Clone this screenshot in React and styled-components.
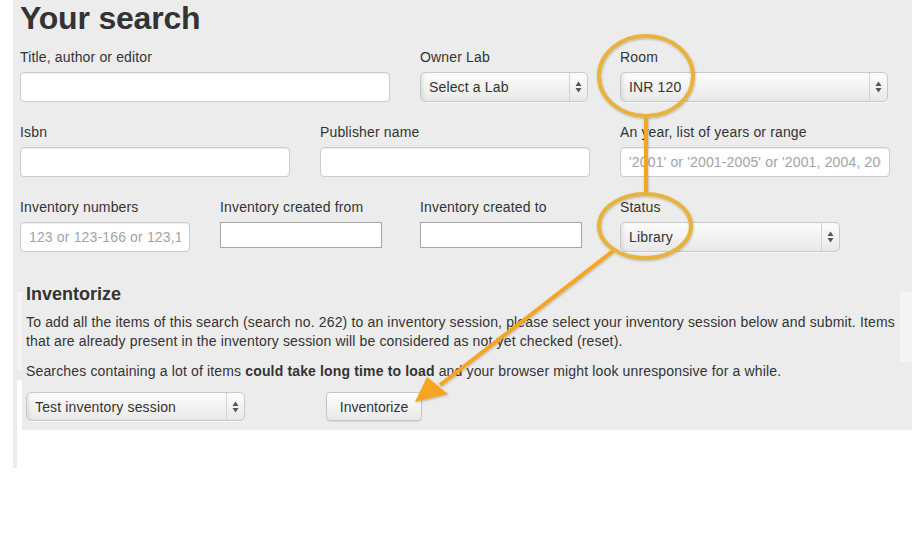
import React from "react";
import styled, { createGlobalStyle } from "styled-components";

const GlobalStyle = createGlobalStyle`
  body {
    margin: 0;
    background: #fff;
    font-family: "Liberation Sans", Helvetica, Arial, sans-serif;
    font-size: 14px;
    color: #333;
  }
`;

const rows = [
  [
    { label: "Title, author or editor", span: 4, kind: "text", width: 370 },
    { label: "Owner Lab", span: 2, kind: "select", width: 168, value: "Select a Lab" },
    { label: "Room", span: 3, kind: "select", width: 268, value: "INR 120" },
  ],
  [
    { label: "Isbn", span: 3, kind: "text", width: 270 },
    { label: "Publisher name", span: 3, kind: "text", width: 270 },
    {
      label: "An year, list of years or range",
      span: 3,
      kind: "text",
      width: 270,
      placeholder: "'2001' or '2001-2005' or '2001, 2004, 2005'",
    },
  ],
  [
    {
      label: "Inventory numbers",
      span: 2,
      kind: "text",
      width: 170,
      placeholder: "123 or 123-166 or 123,124",
    },
    { label: "Inventory created from", span: 2, kind: "plain", width: 162 },
    { label: "Inventory created to", span: 2, kind: "plain", width: 162 },
    { label: "Status", span: 3, kind: "select", width: 220, value: "Library" },
  ],
];

const Arrows = () => (
  <svg width="7" height="12" viewBox="0 0 7 12">
    <path d="M3.5 0.5 L6.5 5 L0.5 5 Z" fill="#555" />
    <path d="M3.5 11.5 L6.5 7 L0.5 7 Z" fill="#555" />
  </svg>
);

const Select = ({ value, width, height = 30 }) => (
  <SelectBox $width={width} $height={height}>
    <SelectValue>{value}</SelectValue>
    <SelectArrow>
      <Arrows />
    </SelectArrow>
  </SelectBox>
);

const Field = ({ f }) => (
  <FieldCol $span={f.span}>
    <Label>{f.label}</Label>
    {f.kind === "select" && <Select value={f.value} width={f.width} />}
    {f.kind === "text" && (
      <TextInput type="text" $width={f.width} placeholder={f.placeholder || ""} />
    )}
    {f.kind === "plain" && <PlainInput type="text" $width={f.width} />}
  </FieldCol>
);

// orange annotation drawn over the form
const Annotations = () => (
  <Overlay width="924" height="560" viewBox="0 0 924 560">
    <defs>
      <filter id="sh" x="-10%" y="-10%" width="120%" height="120%">
        <feDropShadow dx="0.5" dy="1" stdDeviation="1" floodColor="#000" floodOpacity="0.25" />
      </filter>
    </defs>
    <g filter="url(#sh)">
      <line x1="646" y1="116" x2="646" y2="196" stroke="#f5a524" strokeWidth="4" />
      <line x1="613" y1="251" x2="440" y2="385" stroke="#f5a524" strokeWidth="4" />
      <polygon points="415,402 427,377 448,394" fill="#f5a524" />
      <ellipse cx="646" cy="76" rx="47" ry="40" fill="none" stroke="#e8b33c" strokeWidth="4" />
      <ellipse cx="645" cy="226" rx="46" ry="32" fill="none" stroke="#e8b33c" strokeWidth="4" />
    </g>
  </Overlay>
);

export default function App() {
  return (
    <Root>
      <GlobalStyle />
      <Panel>
        <Title>Your search</Title>
        <Form>
          {rows.map((row, i) => (
            <Row key={i}>
              {row.map((f) => (
                <Field key={f.label} f={f} />
              ))}
            </Row>
          ))}
        </Form>
      </Panel>
      <SectionRow>
        <Gutter />
        <Section>
          <SectionTitle>Inventorize</SectionTitle>
          <Text>
            To add all the items of this search (search no. 262) to an inventory session, please select your inventory session below and submit. Items
            <br />
            that are already present in the inventory session will be considered as not yet checked (reset).
          </Text>
          <Text>
            Searches containing a lot of items <b>could take long time to load</b> and your browser might look unresponsive for a while.
          </Text>
          <Controls>
            <Select value="Test inventory session" width={219} height={29} />
            <Button>Inventorize</Button>
          </Controls>
        </Section>
      </SectionRow>
      <Tail />
      <Annotations />
    </Root>
  );
}

const Root = styled.div`
  position: relative;
  width: 924px;
  height: 560px;
  overflow: hidden;
`;

const Panel = styled.div`
  margin-left: 13px;
  width: 899px;
  box-sizing: border-box;
  padding-left: 7px;
  background: #ececec;
`;

const Title = styled.h1`
  margin: 0;
  font-size: 32px;
  line-height: 36px;
  font-weight: bold;
  color: #333;
  letter-spacing: -0.2px;
`;

const Form = styled.div`
  padding-top: 11px;
`;

const Row = styled.div`
  display: flex;
  padding-bottom: 20px;
`;

const FieldCol = styled.div`
  flex: 0 0 ${(p) => p.$span * 100}px;
  display: flex;
  flex-direction: column;
  align-items: flex-start;
`;

const Label = styled.label`
  display: block;
  font-size: 14px;
  line-height: 20px;
  margin-bottom: 5px;
  color: #333;
  letter-spacing: 0.15px;
  white-space: nowrap;
`;

const TextInput = styled.input`
  box-sizing: border-box;
  width: ${(p) => p.$width}px;
  height: 30px;
  margin: 0;
  padding: 4px 8px;
  border: 1px solid #ccc;
  border-radius: 4px;
  background: #fff;
  box-shadow: inset 0 1px 1px rgba(0, 0, 0, 0.075);
  font-family: inherit;
  font-size: 14px;
  letter-spacing: 0.15px;
  color: #555;
  outline: none;

  &::placeholder {
    color: #a3a3a3;
  }
`;

const PlainInput = styled.input`
  box-sizing: border-box;
  width: ${(p) => p.$width}px;
  height: 26px;
  margin: 0;
  padding: 2px 4px;
  border: 1px solid #a5a5a5;
  border-radius: 0;
  background: #fff;
  font-family: inherit;
  font-size: 13px;
  outline: none;
`;

const SelectBox = styled.div`
  box-sizing: border-box;
  width: ${(p) => p.$width}px;
  height: ${(p) => p.$height}px;
  display: flex;
  align-items: stretch;
  border: 1px solid #c9c9c9;
  border-radius: 5px;
  background: linear-gradient(to bottom, #fdfdfd 0%, #f3f3f3 45%, #e9e9e9 100%);
  box-shadow: inset 3px 0 4px -2px rgba(0, 0, 0, 0.12), 0 1px 0 rgba(255, 255, 255, 0.6);
`;

const SelectValue = styled.span`
  flex: 1;
  display: flex;
  align-items: center;
  padding-left: 8px;
  font-size: 14px;
  letter-spacing: 0.15px;
  color: #333;
  white-space: nowrap;
  overflow: hidden;
`;

const SelectArrow = styled.span`
  width: 17px;
  display: flex;
  align-items: center;
  justify-content: center;
  border-left: 1px solid #d3d3d3;
`;

const SectionRow = styled.div`
  display: flex;
`;

const Gutter = styled.div`
  margin-left: 13px;
  width: 9px;
  box-sizing: border-box;
  border-left: 4px solid #ececec;
  background: linear-gradient(
    to bottom,
    #ececec 0 20px,
    #f4f4f4 20px 98px,
    #ececec 98px 108px,
    #fff 108px
  );
`;

const Section = styled.div`
  width: 890px;
  box-sizing: border-box;
  padding: 12px 0 9px 4px;
  background: linear-gradient(90deg, transparent 878px, #f4f4f4 878px) no-repeat 0 20px / 100% 70px,
    #ececec;
`;

const SectionTitle = styled.h2`
  margin: 0 0 9px;
  font-size: 18px;
  line-height: 20px;
  font-weight: bold;
  color: #333;
`;

const Text = styled.p`
  margin: 0 0 11px;
  font-size: 14px;
  line-height: 19px;
  letter-spacing: 0.15px;
  color: #333;
  white-space: nowrap;

  b {
    font-weight: bold;
  }
`;

const Controls = styled.div`
  display: flex;
  align-items: center;
`;

const Button = styled.button`
  box-sizing: border-box;
  margin-left: 81px;
  width: 96px;
  height: 29px;
  padding: 0;
  border: 1px solid #c4c4c4;
  border-radius: 4px;
  background: linear-gradient(to bottom, #ffffff, #e8e8e8);
  box-shadow: 0 1px 1px rgba(0, 0, 0, 0.08);
  font-family: inherit;
  font-size: 14px;
  color: #333;
`;

const Tail = styled.div`
  margin-left: 13px;
  width: 4px;
  height: 38px;
  background: #ececec;
`;

const Overlay = styled.svg`
  position: absolute;
  left: 0;
  top: 0;
  pointer-events: none;
`;
